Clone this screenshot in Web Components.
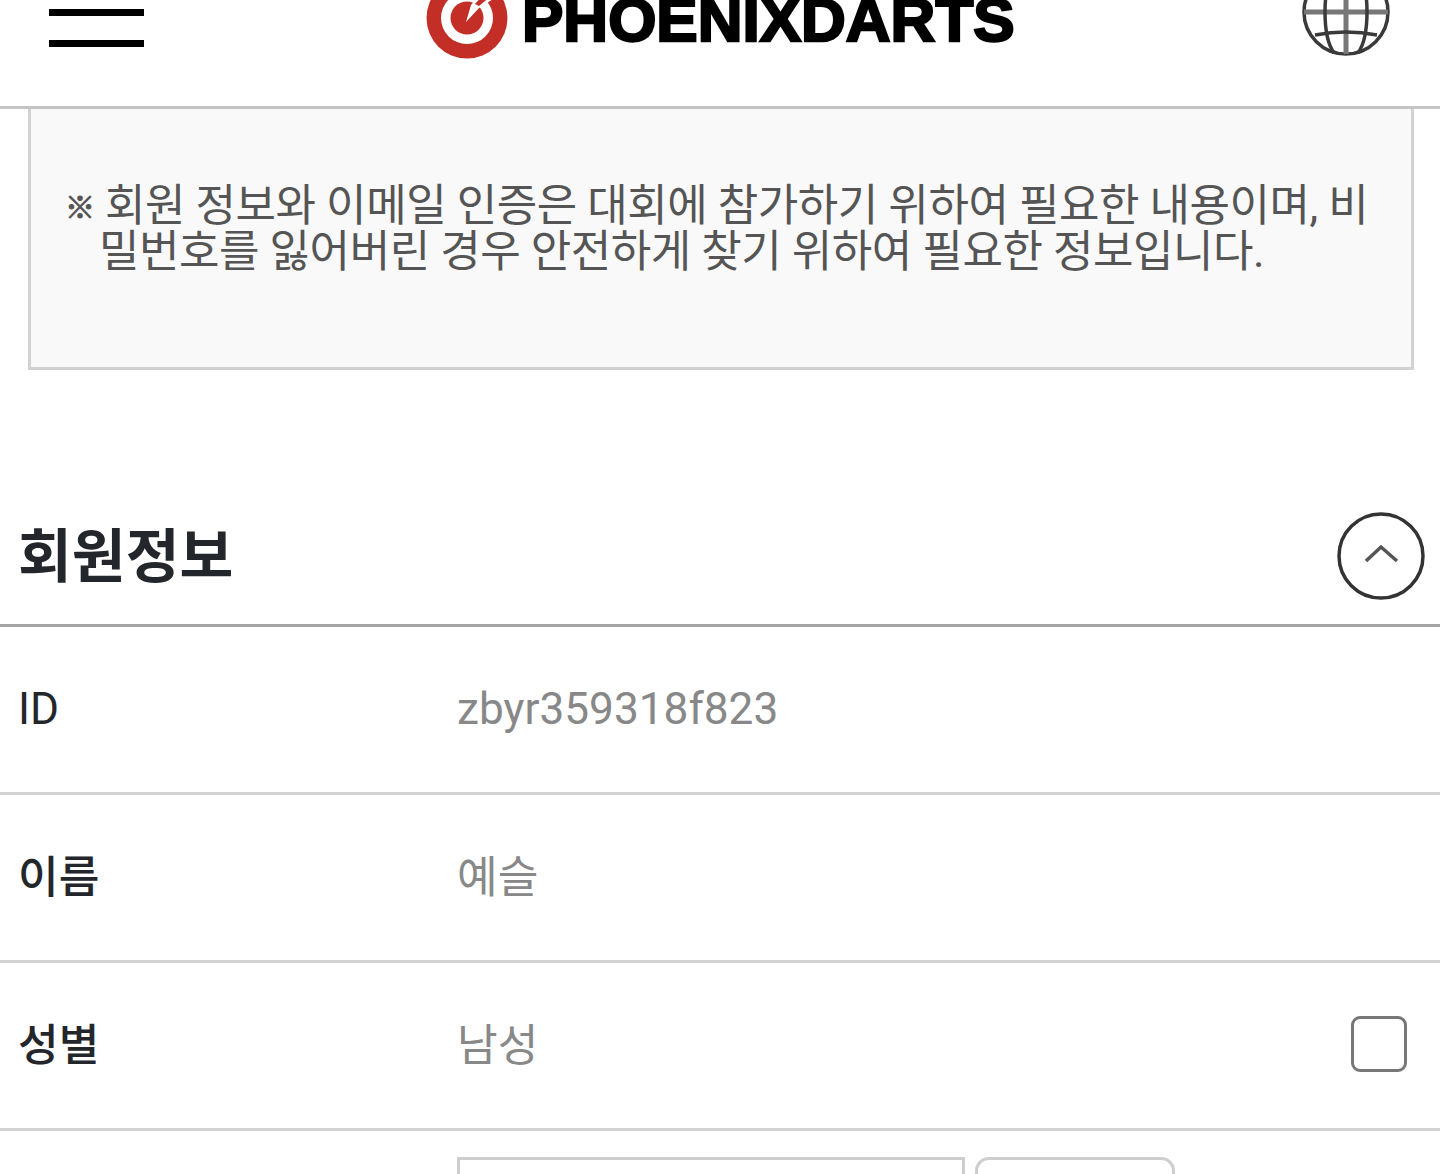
<!DOCTYPE html>
<html lang="ko">
<head>
<meta charset="utf-8">
<title>PHOENIXDARTS</title>
<style>
html, body { margin: 0; padding: 0; height: 1174px; overflow: hidden; background: #fff; }
body { font-family: Roboto, "Noto Sans CJK KR", sans-serif; }
</style>
</head>
<body>
<top-bar></top-bar>
<notice-box>회원 정보와 이메일 인증은 대회에 참가하기 위하여 필요한 내용이며, 비밀번호를 잃어버린 경우 안전하게 찾기 위하여 필요한 정보입니다.</notice-box>
<section-head>회원정보</section-head>
<info-row label="ID" latin>zbyr359318f823</info-row>
<info-row label="이름">예슬</info-row>
<info-row label="성별" check>남성</info-row>
<field-row></field-row>

<script>
class top_bar extends HTMLElement {
    constructor() {
        super();
        this.attachShadow({mode: 'open'});
        this.shadowRoot.innerHTML = `
        <style>
            :host { display: block; height: 106px; border-bottom: 3px solid #c4c4c4; overflow: hidden; }
            #bar { display: flex; align-items: flex-start; height: 106px; position: relative; }
            #menu { width: 95px; margin: 9px 0 0 49px; display: flex; flex-direction: column; gap: 24px; flex: none; }
            #menu i { display: block; height: 7px; background: #000; }
            #logo { display: flex; align-items: flex-start; margin: -22px 0 0 282px; flex: none; }
            #logo svg { display: block; flex: none; filter: blur(0.5px); }
            #logo span { font: 700 62px/1 "Liberation Sans", Arial, sans-serif; color: #000; -webkit-text-stroke: 2.4px #000;
                margin: 11px 0 0 14px; white-space: nowrap; }
            #globe { position: absolute; left: 1302px; top: -32px; display: block; filter: blur(0.6px); }
        </style>
        <div id="bar">
            <div id="menu"><i></i><i></i></div>
            <div id="logo">
                <svg width="82" height="82" viewBox="0 0 82 82">
                    <circle cx="41" cy="40" r="40.5" fill="#c32f27"/>
                    <circle cx="41" cy="40" r="26" fill="#fff"/>
                    <circle cx="41" cy="40" r="16.5" fill="#c32f27"/>
                    <path d="M40 44 L45 27 L60 8 L72 18 L53 30 Z" fill="#fff"/>
                    <path d="M49 26 L60 14 L65 18 L53 28 Z" fill="#c32f27"/>
                </svg>
                <span>PHOENIXDARTS</span>
            </div>
            <svg id="globe" width="88" height="88" viewBox="0 0 88 88" fill="none" stroke="#3a3a3a" stroke-width="3.5">
                <circle cx="44" cy="44" r="42"/>
                <path d="M44 2 V86" stroke="#777" stroke-width="5"/>
                <path d="M2 44 H86" stroke="#777" stroke-width="5"/>
                <path d="M32 3 C20 20 20 68 32 85 M56 3 C68 20 68 68 56 85"/>
                <path d="M13 21 Q44 27 75 21 M13 67 Q44 61 75 67"/>
            </svg>
        </div>`;
    }
}
customElements.define('top-bar', top_bar);

class notice_box extends HTMLElement {
    constructor() {
        super();
        this.attachShadow({mode: 'open'});
        this.shadowRoot.innerHTML = `
        <style>
            :host { display: flex; align-items: center; box-sizing: border-box; height: 261px; margin: 0 26px 0 28px;
                border: 3px solid #d2d2d2; border-top: 0; background: #f9f9f9; padding: 0 10px 18px 38px;
                font-size: 44px; line-height: 46px; color: #555; word-break: break-all; }
            #text { text-indent: -34px; padding-left: 30px; letter-spacing: -0.45px; }
            b { font-weight: 700; font-size: 30px; line-height: 0; vertical-align: 3px; -webkit-text-stroke: 1px #555; }
        </style>
        <div id="text"><b>※</b> <slot></slot></div>`;
    }
}
customElements.define('notice-box', notice_box);

class section_head extends HTMLElement {
    constructor() {
        super();
        this.attachShadow({mode: 'open'});
        this.shadowRoot.innerHTML = `
        <style>
            :host { display: flex; align-items: center; justify-content: space-between; box-sizing: border-box;
                height: 257px; padding: 117px 15px 0 20px; border-bottom: 3px solid #a4a4a4;
                font-size: 58.5px; font-weight: 700; color: #23272b; }
            div { margin: 0 0 8px -2px; }
            svg { display: block; filter: blur(0.6px); }
        </style>
        <div><slot></slot></div>
        <svg width="88" height="88" viewBox="0 0 88 88" fill="none" stroke="#333" stroke-width="3.5">
            <circle cx="44" cy="44" r="42"/>
            <path d="M29 49 L44 35 L60 49" stroke="#555"/>
        </svg>`;
    }
}
customElements.define('section-head', section_head);

class info_row extends HTMLElement {
    constructor() {
        super();
        this.attachShadow({mode: 'open'});
        this.shadowRoot.innerHTML = `
        <style>
            :host { display: grid; grid-template-columns: 439px 1fr auto; align-items: center; box-sizing: border-box;
                height: 168px; padding: 0 33px 7px 18px; border-bottom: 3px solid #d2d2d2; font-size: 44.2px; }
            :host([latin]) { padding-bottom: 2px; }
            :host([latin]) #label { font-weight: 400; }
            #label { color: #23272b; font-weight: 500; }
            #value { color: #888; }
            #check { width: 50px; height: 50px; border: 3px solid #777; border-radius: 9px; margin-top: 3px; }
            #check[hidden] { display: none; }
        </style>
        <div id="label"></div>
        <div id="value"><slot></slot></div>
        <div id="check" hidden></div>`;
    }
    connectedCallback() {
        this.shadowRoot.querySelector('#label').textContent = this.getAttribute('label');
        this.shadowRoot.querySelector('#check').hidden = !this.hasAttribute('check');
    }
}
customElements.define('info-row', info_row);

class field_row extends HTMLElement {
    constructor() {
        super();
        this.attachShadow({mode: 'open'});
        this.shadowRoot.innerHTML = `
        <style>
            :host { display: flex; gap: 10px; padding: 26px 0 0 457px; height: 18px; overflow: hidden; }
            div { box-sizing: border-box; height: 80px; border: 3px solid #cecece; flex: none; }
            #input { width: 508px; }
            #button { width: 200px; border-radius: 14px; }
        </style>
        <div id="input"></div>
        <div id="button"></div>`;
    }
}
customElements.define('field-row', field_row);
</script>
</body>
</html>
